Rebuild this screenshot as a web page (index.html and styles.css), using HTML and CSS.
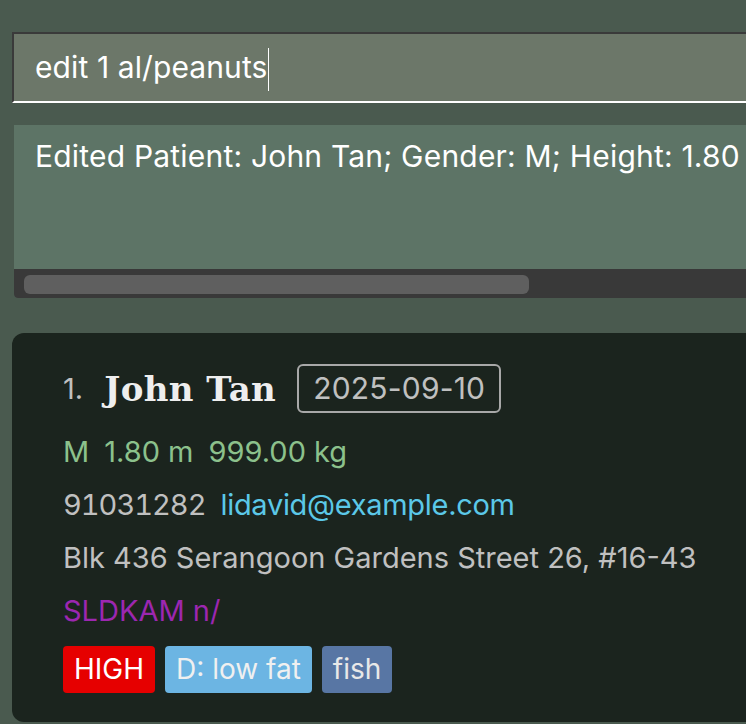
FILE: index.html
```html
<!DOCTYPE html>
<html>
<head>
<meta charset="utf-8">
<link rel="stylesheet" href="styles.css">
</head>
<body>
<div class="app">
  <div class="command">edit 1 al/peanuts<span class="caret"></span></div>
  <div class="result">
    <div class="result-text">Edited Patient: John Tan; Gender: M; Height: 1.80</div>
    <div class="scrollbar"><div class="thumb"></div></div>
  </div>
  <div class="card">
    <div class="row head">
      <span class="index">1.</span>
      <span class="name">John Tan</span>
      <span class="date">2025-09-10</span>
    </div>
    <div class="row green"><span>M</span><span>1.80 m</span><span>999.00 kg</span></div>
    <div class="row"><span class="gray num">91031282</span><span class="email">lidavid@example.com</span></div>
    <div class="row gray">Blk 436 Serangoon Gardens Street 26, #16-43</div>
    <div class="row purple">SLDKAM n/</div>
    <div class="tags">
      <span class="tag high">HIGH</span>
      <span class="tag diet">D: low fat</span>
      <span class="tag allergy">fish</span>
    </div>
  </div>
</div>
</body>
</html>
```

FILE: styles.css
```css
html, body {
  margin: 0;
  padding: 0;
  background: #4a5a4f;
  overflow: hidden;
}
body {
  font-family: Inter, "Noto Sans", sans-serif;
  width: 746px;
  height: 724px;
}
.app {
  padding: 32px 0 0 12px;
}
.command {
  height: 67px;
  background: #6c7769;
  border-top: 2px solid #3a3a3a;
  border-left: 2px solid #3a3a3a;
  border-bottom: 2px solid #ffffff;
  color: #ffffff;
  font-size: 30px;
  letter-spacing: 0.1px;
  line-height: 67px;
  padding-left: 21px;
  white-space: nowrap;
}
.caret {
  display: inline-block;
  width: 1px;
  height: 43px;
  background: #ffffff;
  vertical-align: middle;
  margin-left: 1px;
}
.result {
  margin: 22px 0 0 2px;
  background: #5d7466;
  height: 173px;
  display: flex;
  flex-direction: column;
  border-bottom-left-radius: 4px;
  overflow: hidden;
}
.result-text {
  flex: 1;
  color: #ffffff;
  font-size: 30px;
  letter-spacing: 0.2px;
  padding: 13px 0 0 21px;
  white-space: nowrap;
}
.scrollbar {
  height: 29px;
  background: #393939;
  padding: 6px 0 0 10px;
  box-sizing: border-box;
}
.thumb {
  width: 505px;
  height: 19px;
  background: #5f5f5f;
  border-radius: 6px;
}
.card {
  margin-top: 35px;
  background: #1b241e;
  border-radius: 12px 0 0 12px;
  height: 389px;
  box-sizing: border-box;
  padding: 31px 0 0 51px;
}
.row {
  display: flex;
  align-items: center;
  gap: 15px;
  font-size: 29px;
  height: 53px;
  white-space: nowrap;
}
.head {
  height: 49px;
  gap: 0;
  margin-bottom: 12px;
}
.index {
  color: #c0c0c0;
  margin-right: 21px;
}
.name {
  font-family: "DejaVu Serif", serif;
  font-weight: bold;
  font-size: 34px;
  letter-spacing: 0.4px;
  color: #eeeeee;
  margin-right: 21px;
}
.date {
  border: 2px solid #a8a8a8;
  border-radius: 6px;
  color: #c0c0c0;
  padding: 0 14px;
  height: 45px;
  line-height: 45px;
  font-size: 30px;
  letter-spacing: 0.2px;
}
.num { font-variant-numeric: tabular-nums; letter-spacing: -1px; }
.email { color: #5bc8e8; letter-spacing: -0.3px; }
.green { color: #8cc18c; }
.gray { color: #c0c0c0; }
.purple { color: #9c27b0; }
.tags {
  display: flex;
  gap: 10px;
  margin-top: 9px;
}
.tag {
  font-size: 28px;
  color: #ffffff;
  border-radius: 4px;
  height: 47px;
  line-height: 47px;
  padding: 0 11px;
}
.high { background: #e60000; }
.diet { background: #6cb5e3; color: #f0f0f0; }
.allergy { background: #5876a4; color: #e8e8e8; }
```
